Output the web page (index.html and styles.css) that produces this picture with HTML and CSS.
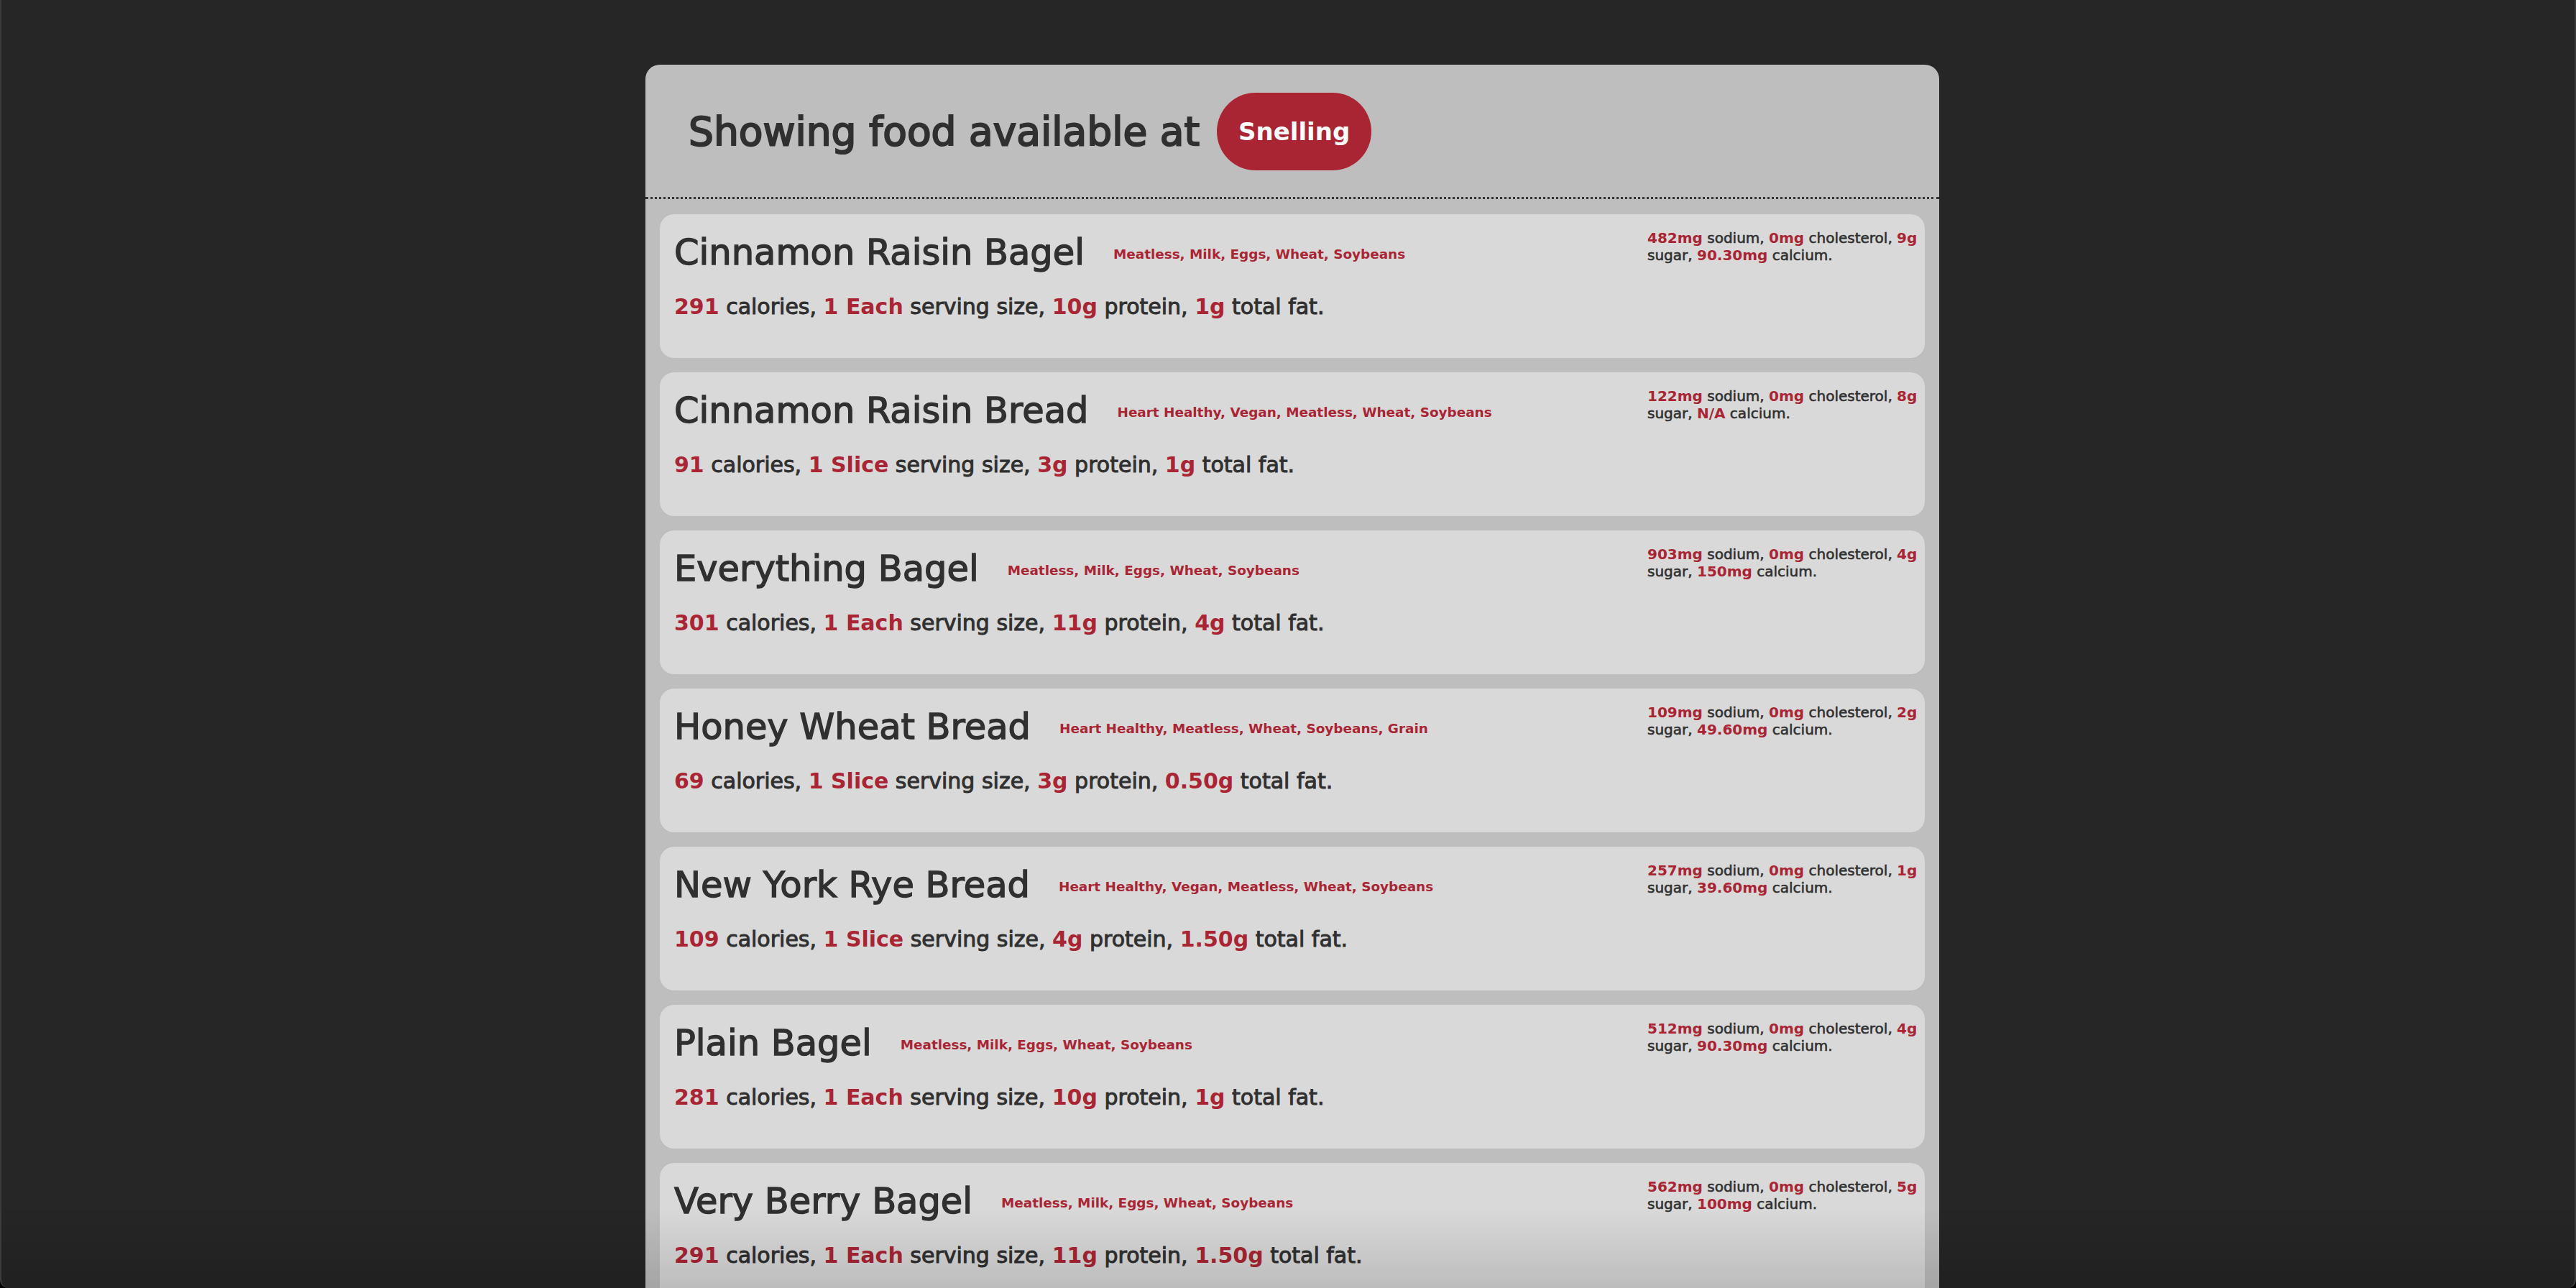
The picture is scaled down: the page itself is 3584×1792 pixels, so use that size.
FILE: index.html
```html
<!DOCTYPE html>
<html lang="en">
<head>
<meta charset="utf-8">
<title>Food at Snelling</title>
<link rel="stylesheet" href="styles.css">
</head>
<body>
<div class="frame"></div>
<div class="fade"></div>
<main class="panel">
  <header class="panel-head">
    <h1 class="title">Showing food available at</h1>
    <span class="hall">Snelling</span>
  </header>
  <section class="list">
    <article class="food">
      <div class="food-main">
        <div class="food-top">
          <h2 class="food-name">Cinnamon Raisin Bagel</h2>
          <span class="tags">Meatless, Milk, Eggs, Wheat, Soybeans</span>
        </div>
        <p class="macros"><b>291</b> calories, <b>1 Each</b> serving size, <b>10g</b> protein, <b>1g</b> total fat.</p>
      </div>
      <p class="micros"><b>482mg</b> sodium, <b>0mg</b> cholesterol, <b>9g</b> sugar, <b>90.30mg</b> calcium.</p>
    </article>
    <article class="food">
      <div class="food-main">
        <div class="food-top">
          <h2 class="food-name">Cinnamon Raisin Bread</h2>
          <span class="tags">Heart Healthy, Vegan, Meatless, Wheat, Soybeans</span>
        </div>
        <p class="macros"><b>91</b> calories, <b>1 Slice</b> serving size, <b>3g</b> protein, <b>1g</b> total fat.</p>
      </div>
      <p class="micros"><b>122mg</b> sodium, <b>0mg</b> cholesterol, <b>8g</b> sugar, <b>N/A</b> calcium.</p>
    </article>
    <article class="food">
      <div class="food-main">
        <div class="food-top">
          <h2 class="food-name">Everything Bagel</h2>
          <span class="tags">Meatless, Milk, Eggs, Wheat, Soybeans</span>
        </div>
        <p class="macros"><b>301</b> calories, <b>1 Each</b> serving size, <b>11g</b> protein, <b>4g</b> total fat.</p>
      </div>
      <p class="micros"><b>903mg</b> sodium, <b>0mg</b> cholesterol, <b>4g</b> sugar, <b>150mg</b> calcium.</p>
    </article>
    <article class="food">
      <div class="food-main">
        <div class="food-top">
          <h2 class="food-name">Honey Wheat Bread</h2>
          <span class="tags">Heart Healthy, Meatless, Wheat, Soybeans, Grain</span>
        </div>
        <p class="macros"><b>69</b> calories, <b>1 Slice</b> serving size, <b>3g</b> protein, <b>0.50g</b> total fat.</p>
      </div>
      <p class="micros"><b>109mg</b> sodium, <b>0mg</b> cholesterol, <b>2g</b> sugar, <b>49.60mg</b> calcium.</p>
    </article>
    <article class="food">
      <div class="food-main">
        <div class="food-top">
          <h2 class="food-name">New York Rye Bread</h2>
          <span class="tags">Heart Healthy, Vegan, Meatless, Wheat, Soybeans</span>
        </div>
        <p class="macros"><b>109</b> calories, <b>1 Slice</b> serving size, <b>4g</b> protein, <b>1.50g</b> total fat.</p>
      </div>
      <p class="micros"><b>257mg</b> sodium, <b>0mg</b> cholesterol, <b>1g</b> sugar, <b>39.60mg</b> calcium.</p>
    </article>
    <article class="food">
      <div class="food-main">
        <div class="food-top">
          <h2 class="food-name">Plain Bagel</h2>
          <span class="tags">Meatless, Milk, Eggs, Wheat, Soybeans</span>
        </div>
        <p class="macros"><b>281</b> calories, <b>1 Each</b> serving size, <b>10g</b> protein, <b>1g</b> total fat.</p>
      </div>
      <p class="micros"><b>512mg</b> sodium, <b>0mg</b> cholesterol, <b>4g</b> sugar, <b>90.30mg</b> calcium.</p>
    </article>
    <article class="food">
      <div class="food-main">
        <div class="food-top">
          <h2 class="food-name">Very Berry Bagel</h2>
          <span class="tags">Meatless, Milk, Eggs, Wheat, Soybeans</span>
        </div>
        <p class="macros"><b>291</b> calories, <b>1 Each</b> serving size, <b>11g</b> protein, <b>1.50g</b> total fat.</p>
      </div>
      <p class="micros"><b>562mg</b> sodium, <b>0mg</b> cholesterol, <b>5g</b> sugar, <b>100mg</b> calcium.</p>
    </article>
  </section>
</main>
</body>
</html>
```
FILE: styles.css
```css
html, body {
  margin: 0;
  background: #262626;
}
body {
  padding: 90px 0 0 12px;
  font-family: "DejaVu Sans", "Liberation Sans", sans-serif;
  color: #303030;
}
.frame {
  position: fixed;
  inset: 0;
  border-left: 2px solid #3c3c3c;
  border-right: 2px solid #3c3c3c;
  border-radius: 0 0 12px 12px;
  box-shadow: 0 0 0 40px #000;
  pointer-events: none;
  z-index: 3;
}
.fade {
  position: fixed;
  left: 0;
  right: 0;
  bottom: 0;
  height: 110px;
  background: linear-gradient(to bottom, rgba(0,0,0,0), rgba(0,0,0,0.13));
  pointer-events: none;
  z-index: 2;
}
.panel {
  width: 1800px;
  margin: 0 auto;
  background: #bebebe;
  border-radius: 20px;
  padding-bottom: 20px;
}
.panel-head {
  height: 187px;
  box-sizing: border-box;
  display: flex;
  align-items: center;
  padding: 2px 0 0 60px;
  border-bottom: 3px dotted #333333;
}
.title {
  margin: 0;
  font-size: 55px;
  font-weight: 400;
  line-height: 1.2;
  -webkit-text-stroke: 2.1px #303030;
}
.hall {
  margin-left: 24px;
  background: #aa2534;
  color: #ffffff;
  font-weight: 700;
  font-size: 34px;
  line-height: 48px;
  padding: 30px 30px;
  border-radius: 54px;
}
.list {
  display: flex;
  flex-direction: column;
  gap: 20px;
  padding: 21px 20px 0;
}
.food {
  display: flex;
  min-height: 200px;
  box-sizing: border-box;
  padding: 20px 7px 20px 20px;
  background: #d9d9d9;
  border-radius: 20px;
}
.food-main {
  flex: 1;
  padding-top: 4px;
}
.food-top {
  display: flex;
  align-items: center;
}
.food-name {
  margin: 0;
  font-size: 49.5px;
  font-weight: 400;
  line-height: 1.2;
  -webkit-text-stroke: 1.4px #303030;
}
.tags {
  margin-left: 40px;
  padding-top: 3px;
  font-size: 18.4px;
  font-weight: 700;
  color: #aa2534;
}
.macros {
  margin: 28px 0 0;
  font-size: 30px;
  line-height: 1.2;
  -webkit-text-stroke: 1px #303030;
}
.macros b, .micros b {
  color: #aa2534;
  font-weight: 700;
  -webkit-text-stroke: 0;
}
.micros {
  width: 379px;
  margin: 1px 0 0;
  font-size: 20px;
  line-height: 24px;
  -webkit-text-stroke: 0.6px #303030;
}
```
